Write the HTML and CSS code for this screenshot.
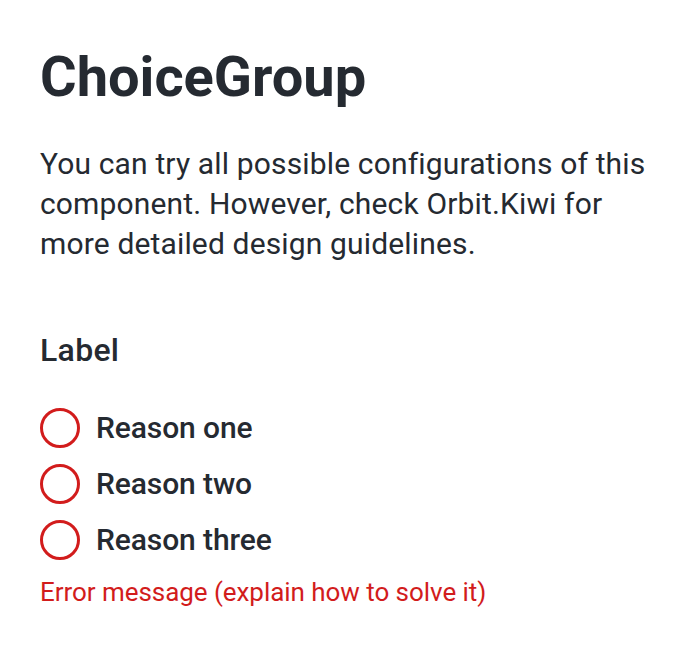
FILE: index.html
```html
<!DOCTYPE html>
<html>
<head>
<meta charset="utf-8">
<link rel="stylesheet" href="styles.css">
</head>
<body>
<main class="page">
  <h1 class="title">ChoiceGroup</h1>
  <p class="intro">You can try all possible configurations of this component. However, check Orbit.Kiwi for more detailed design guidelines.</p>
  <fieldset class="group">
    <legend class="group-label">Label</legend>
    <div class="options">
      <label class="option"><span class="radio"></span><span class="option-text">Reason one</span></label>
      <label class="option"><span class="radio"></span><span class="option-text">Reason two</span></label>
      <label class="option"><span class="radio"></span><span class="option-text">Reason three</span></label>
    </div>
    <div class="error">Error message (explain how to solve it)</div>
  </fieldset>
</main>
</body>
</html>
```
FILE: styles.css
```css
* { box-sizing: border-box; }
html, body { margin: 0; padding: 0; background: #fff; }
body { font-family: Roboto, "Noto Sans", sans-serif; color: #252a31; }
.page { padding: 45px 40px 0 40px; }
.title { margin: 0; font-size: 56px; font-weight: 700; line-height: 64px; }
.intro { margin: 35px 0 0 0; font-size: 30px; line-height: 40px; font-weight: 400; letter-spacing: 0.15px; }
.group { border: 0; padding: 0; margin: 66px 0 0 0; }
.group-label { padding: 0; font-size: 32px; font-weight: 500; line-height: 40px; letter-spacing: 0.3px; }
.options { display: flex; flex-direction: column; gap: 16px; margin-top: 38px; }
.option { display: flex; align-items: center; gap: 16px; height: 40px; }
.radio { width: 40px; height: 40px; border: 3px solid #d21c1c; border-radius: 50%; flex: none; }
.option-text { font-size: 30px; font-weight: 500; line-height: 40px; letter-spacing: -0.1px; }
.error { margin-top: 16px; font-size: 26px; line-height: 32px; color: #d21c1c; letter-spacing: -0.05px; }
```
